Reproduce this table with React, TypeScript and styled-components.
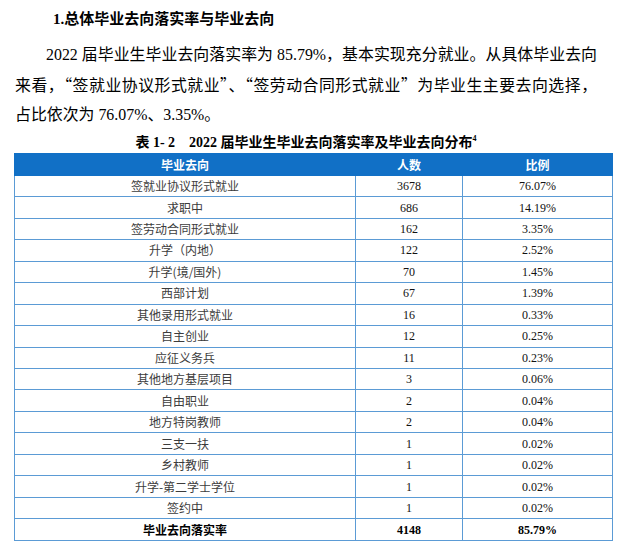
import React from "react";
import styled, { createGlobalStyle } from "styled-components";

const GlobalStyle = createGlobalStyle`
  html, body { margin: 0; padding: 0; background: #ffffff; }
  body { font-family: "Liberation Serif", "Noto Sans CJK SC", serif; color: #000; }
`;

const Page = styled.div`
  width: 612px;
  display: flex;
  flex-direction: column;
`;

const Title = styled.h2`
  margin: 9px 0 0 53px;
  font-size: 15px;
  line-height: 21px;
  font-weight: 700;
  font-family: "Liberation Serif", "Noto Sans CJK SC", serif;
  color: #000;
`;

const Para = styled.div`
  margin: 10px 0 0 15px;
  width: 582px;
  font-size: 15.9px;
  line-height: 29.5px;
  color: #000;
`;

const Line = styled.div<{ $indent?: boolean; $justify?: boolean }>`
  white-space: nowrap;
  text-indent: ${(p) => (p.$indent ? "31px" : "0")};
  text-align: ${(p) => (p.$justify ? "justify" : "left")};
  text-align-last: ${(p) => (p.$justify ? "justify" : "left")};
`;

const Quote = styled.span`
  font-family: "Noto Sans CJK SC", sans-serif;
`;

const Caption = styled.div`
  margin-top: 3px;
  text-align: center;
  font-size: 14px;
  line-height: 20px;
  font-weight: 700;
  white-space: nowrap;
`;

const Gap = styled.span`
  display: inline-block;
  width: 14px;
`;

const Sup = styled.sup`
  font-size: 8px;
  line-height: 0;
  vertical-align: 6px;
`;

const Table = styled.table`
  margin-left: 14px;
  width: 598px;
  border-collapse: collapse;
  table-layout: fixed;
  font-size: 12px;
`;

const HeadRow = styled.tr`
  height: 22.3px;
`;

const Th = styled.th`
  background: #1170c6;
  border: 1px solid #1170c6;
  color: #ffffff;
  font-weight: 700;
  font-size: 12px;
  padding: 0;
  text-align: center;
  vertical-align: middle;
  font-family: "Noto Sans CJK SC", sans-serif;
`;

const BodyRow = styled.tr`
  height: 21.47px;
`;

const Td = styled.td<{ $bold?: boolean; $cjk?: boolean }>`
  border: 1px solid #5b9bd5;
  padding: 0;
  text-align: center;
  vertical-align: middle;
  line-height: 14px;
  font-size: 12px;
  font-weight: ${(p) => (p.$bold ? 700 : 400)};
  color: ${(p) => (p.$bold ? "#000" : p.$cjk ? "#3c3c3c" : "#111")};
  font-family: ${(p) =>
    p.$cjk
      ? '"Noto Sans CJK SC", sans-serif'
      : '"Liberation Serif", "Noto Sans CJK SC", serif'};
`;

type Row = [string, string, string];

const rows: Row[] = [
  ["签就业协议形式就业", "3678", "76.07%"],
  ["求职中", "686", "14.19%"],
  ["签劳动合同形式就业", "162", "3.35%"],
  ["升学（内地）", "122", "2.52%"],
  ["升学(境/国外)", "70", "1.45%"],
  ["西部计划", "67", "1.39%"],
  ["其他录用形式就业", "16", "0.33%"],
  ["自主创业", "12", "0.25%"],
  ["应征义务兵", "11", "0.23%"],
  ["其他地方基层项目", "3", "0.06%"],
  ["自由职业", "2", "0.04%"],
  ["地方特岗教师", "2", "0.04%"],
  ["三支一扶", "1", "0.02%"],
  ["乡村教师", "1", "0.02%"],
  ["升学-第二学士学位", "1", "0.02%"],
  ["签约中", "1", "0.02%"],
];

export default function App() {
  return (
    <>
      <GlobalStyle />
      <Page>
        <Title>1.总体毕业去向落实率与毕业去向</Title>
        <Para>
          <Line $indent $justify>
            2022 届毕业生毕业去向落实率为 85.79%，基本实现充分就业。从具体毕业去向
          </Line>
          <Line $justify>
            来看，<Quote>“</Quote>签就业协议形式就业<Quote>”</Quote>、<Quote>“</Quote>签劳动合同形式就业<Quote>”</Quote>为毕业生主要去向选择，
          </Line>
          <Line>占比依次为 76.07%、3.35%。</Line>
        </Para>
        <Caption>
          表 1- 2<Gap />2022 届毕业生毕业去向落实率及毕业去向分布<Sup>4</Sup>
        </Caption>
        <Table>
          <colgroup>
            <col style={{ width: 341 }} />
            <col style={{ width: 107 }} />
            <col style={{ width: 150 }} />
          </colgroup>
          <thead>
            <HeadRow>
              <Th>毕业去向</Th>
              <Th>人数</Th>
              <Th>比例</Th>
            </HeadRow>
          </thead>
          <tbody>
            {rows.map((r, i) => (
              <BodyRow key={i}>
                <Td $cjk>{r[0]}</Td>
                <Td>{r[1]}</Td>
                <Td>{r[2]}</Td>
              </BodyRow>
            ))}
            <BodyRow>
              <Td $cjk $bold>
                毕业去向落实率
              </Td>
              <Td $bold>4148</Td>
              <Td $bold>85.79%</Td>
            </BodyRow>
          </tbody>
        </Table>
      </Page>
    </>
  );
}
